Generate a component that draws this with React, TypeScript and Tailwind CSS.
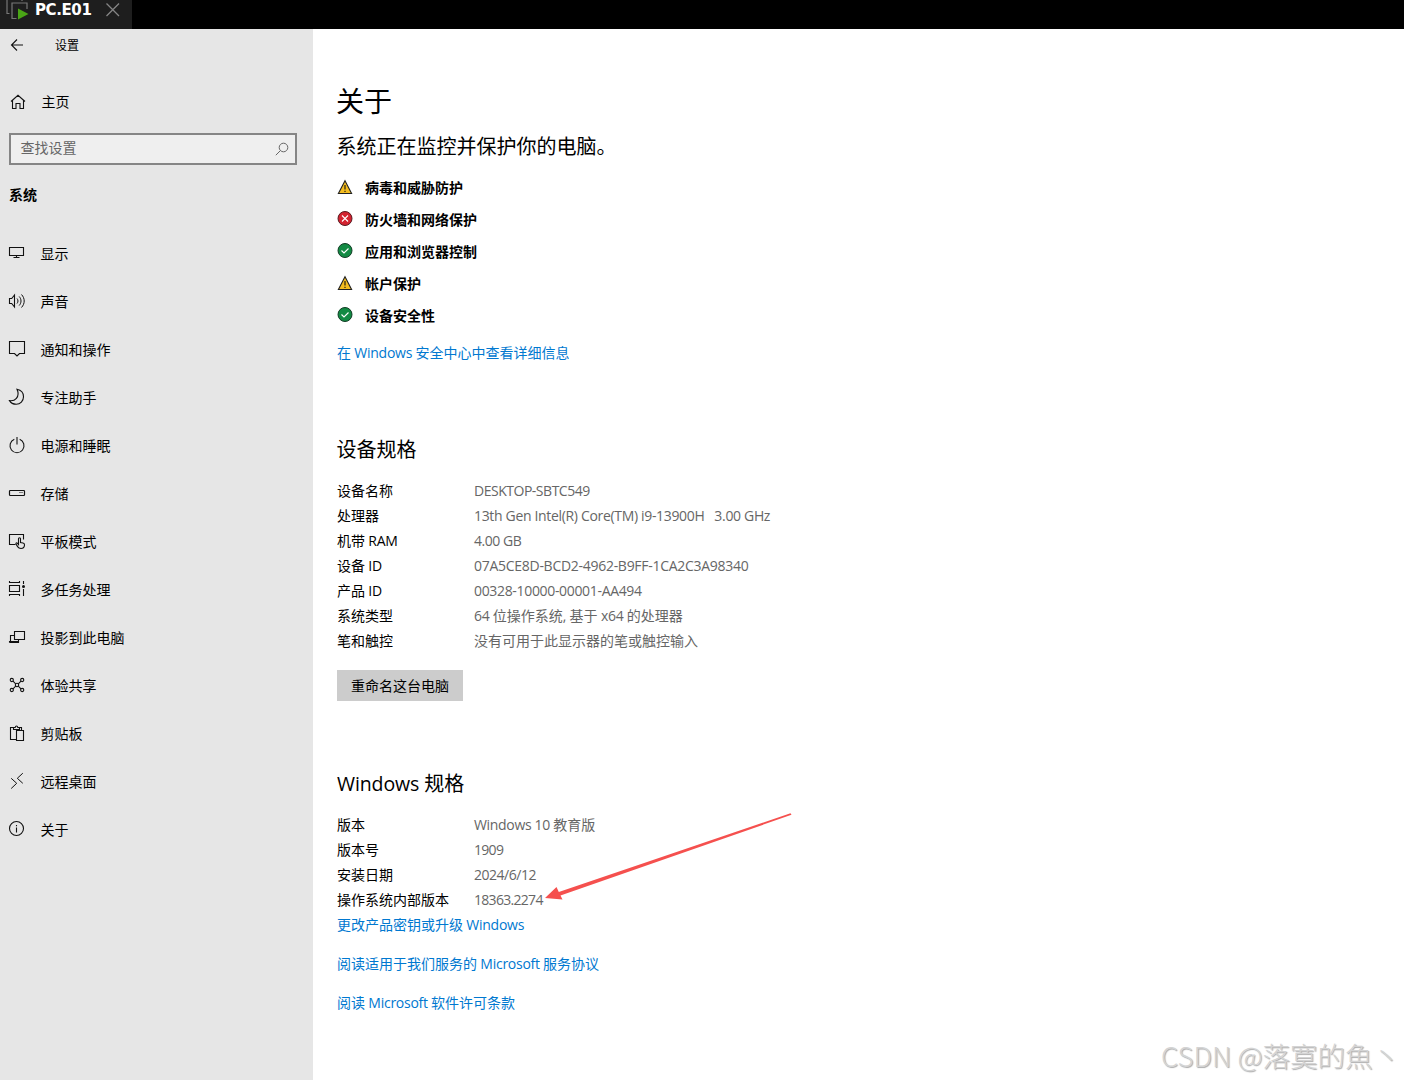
import React from "react";

const CJK = /([\u3000-\u9fff]+)/;

// Splits mixed text so that Latin runs can have their own size.
function Mixed({ text, latin }: { text: string; latin: string }) {
  return (
    <>
      {text.split(CJK).map((part, i) =>
        CJK.test(part) ? (
          <span key={i}>{part}</span>
        ) : (
          <span key={i} className={latin}>
            {part}
          </span>
        ),
      )}
    </>
  );
}

const BODY_LATIN = "text-[14px] tracking-[-0.33px] whitespace-pre font-['Open_Sans']";
const LINK_LATIN = "text-[14px] tracking-[-0.27px] whitespace-pre font-['Open_Sans']";
const DIGIT_LATIN = "text-[14px] tracking-[-0.7px] whitespace-pre font-['Open_Sans']";
const ID_LATIN = "text-[14px] tracking-[-0.28px] whitespace-pre font-['Open_Sans']";
const NAME_LATIN = "text-[14px] tracking-[-0.48px] whitespace-pre font-['Open_Sans']";

function Icon({ children }: { children: React.ReactNode }) {
  return (
    <svg width="18" height="18" viewBox="0 0 18 18" fill="none" stroke="#111" strokeWidth="1.1" className="shrink-0">
      {children}
    </svg>
  );
}

const NAV: { label: string; icon: React.ReactNode }[] = [
  { label: "显示", icon: <path d="M1.5 3.5h14v8h-14zM8.5 11.5v2M5.5 13.5h6" /> },
  {
    label: "声音",
    icon: (
      <>
        <path d="M1.5 6.5h2.2L6.5 3v12L3.7 11.5H1.5z" />
        <path d="M9 6.5c1.3 1.5 1.3 3.5 0 5M11.2 4.5c2.4 2.7 2.4 6.3 0 9M13.5 2.5c3.6 3.9 3.6 9.1 0 13" strokeWidth="1" />
      </>
    ),
  },
  { label: "通知和操作", icon: <path d="M1.5 1.5h15v12h-5l-2.5 2.5-2.500-2.500h-5z" /> },
  { label: "专注助手", icon: <path d="M9 1.2c4 .8 6.500 3.500 6.500 7.500 0 4.300-3.200 7.500-7.300 7.500-3 0-5.300-1.200-6.700-3.600 3 .4 5.300-.4 6.900-2.300C10.400 8 10.500 4.500 9 1.200z" /> },
  {
    label: "电源和睡眠",
    icon: (
      <>
        <path d="M6.300 3.300a7 7 0 1 0 5.400 0" />
        <path d="M9 1v7.500" />
      </>
    ),
  },
  {
    label: "存储",
    icon: (
      <>
        <rect x="1.500" y="6.500" width="15" height="5" rx=".8" strokeWidth="1.200" />
        <path d="M11.500 8.500h1M13.500 8.500h1" />
      </>
    ),
  },
  {
    label: "平板模式",
    icon: (
      <>
        <path d="M7.500 12.500h-6v-10h14v5" />
        <path d="M10.500 12.500V6.800c0-1.500 2-1.500 2 0v3.700l2.500.5c1 .2 1.500.8 1.500 1.800 0 2.200-1.300 3.700-3.500 3.700-1.600 0-2.600-.6-3.400-1.900L8 12c-.4-1 .6-1.500 1.300-.8l1.200 1.300z" />
      </>
    ),
  },
  {
    label: "多任务处理",
    icon: (
      <>
        <path d="M1.500 5.500h10v6h-10zM1.500 1v1.500h10V1M1.500 16v-1.500h10V16M15.500 1v3M15.500 9v7" />
        <circle cx="15.500" cy="6.500" r="1.500" fill="#111" stroke="none" />
      </>
    ),
  },
  {
    label: "投影到此电脑",
    icon: <path d="M6.500 3.500h10v8h-10zM6.500 7.500h-4v6M1.500 14.500h9v-3M1.500 14.500v-1h8.500" />,
  },
  {
    label: "体验共享",
    icon: (
      <>
        <circle cx="3.800" cy="4" r="1.600" />
        <circle cx="14.200" cy="4" r="1.600" />
        <circle cx="3.800" cy="14" r="1.600" />
        <circle cx="14.200" cy="14" r="1.600" />
        <circle cx="9" cy="9" r="1.700" />
        <path d="M5 5.200l2.700 2.600M13 5.200l-2.700 2.600M5 12.800l2.700-2.600M13 12.800l-2.700-2.600" />
      </>
    ),
  },
  {
    label: "剪贴板",
    icon: <path d="M8.500 15.500h-6v-12h3M11 3.500h2.500v3M5.500 5.500v-2h1.700c.3-2 2.300-2 2.600 0h1.700v2zM8.500 6.500h7v10h-7z" />,
  },
  { label: "远程桌面", icon: <path d="M14.800 1.200L9.300 6.300l5.500 5M3.200 6.300l5.500 5-5.500 5.200" strokeWidth="1" /> },
  {
    label: "关于",
    icon: (
      <>
        <circle cx="8.500" cy="8.500" r="7" />
        <path d="M8.500 7.500v5M8.500 5v1.200" />
      </>
    ),
  },
];

function StatusIcon({ kind }: { kind: "warn" | "bad" | "ok" }) {
  if (kind === "warn")
    return (
      <svg width="16" height="16" viewBox="0 0 16 16" className="shrink-0">
        <path d="M8 1.800L14.600 14.500H1.400z" fill="#f5bd1f" stroke="#222" strokeWidth="1.100" />
        <path d="M8 6v4.500M8 11.700v1.300" stroke="#111" strokeWidth="1.100" />
      </svg>
    );
  return (
    <svg width="16" height="16" viewBox="0 0 16 16" className="shrink-0" fill="none">
      <circle cx="8" cy="7.500" r="7" fill={kind === "ok" ? "#128a43" : "#d32330"} stroke={kind === "ok" ? "#123c25" : "#581a20"} />
      <path d={kind === "ok" ? "M4.500 7.500l2.500 2.500 4.500-4.500" : "M5 4.500l6 6M11 4.500l-6 6"} stroke="#fff" strokeWidth="1.100" />
    </svg>
  );
}

const STATUS: ["warn" | "bad" | "ok", string][] = [
  ["warn", "病毒和威胁防护"],
  ["bad", "防火墙和网络保护"],
  ["ok", "应用和浏览器控制"],
  ["warn", "帐户保护"],
  ["ok", "设备安全性"],
];

const DEVICE = [
  ["设备名称", "DESKTOP-SBTC549", NAME_LATIN],
  ["处理器", "13th Gen Intel(R) Core(TM) i9-13900H   3.00 GHz", BODY_LATIN],
  ["机带 RAM", "4.00 GB", NAME_LATIN],
  ["设备 ID", "07A5CE8D-BCD2-4962-B9FF-1CA2C3A98340", ID_LATIN],
  ["产品 ID", "00328-10000-00001-AA494", BODY_LATIN],
  ["系统类型", "64 位操作系统, 基于 x64 的处理器", LINK_LATIN],
  ["笔和触控", "没有可用于此显示器的笔或触控输入", BODY_LATIN],
];

const WINDOWS = [
  ["版本", "Windows 10 教育版", BODY_LATIN],
  ["版本号", "1909", DIGIT_LATIN],
  ["安装日期", "2024/6/12", NAME_LATIN],
  ["操作系统内部版本", "18363.2274", DIGIT_LATIN],
];

function Specs({ rows }: { rows: string[][] }) {
  return (
    <dl className="text-[14px]">
      {rows.map(([k, v, latin]) => (
        <div key={k} className="flex h-[25px] leading-[25px] whitespace-nowrap">
          <dt className="w-[137px] shrink-0 text-black">
            <Mixed text={k} latin={LINK_LATIN} />
          </dt>
          <dd className="text-[#666]">
            <Mixed text={v} latin={latin} />
          </dd>
        </div>
      ))}
    </dl>
  );
}

function Link({ text }: { text: string }) {
  return (
    <a className="block h-[25px] text-[14px] leading-[25px] whitespace-nowrap text-[#0078d0]">
      <Mixed text={text} latin={LINK_LATIN} />
    </a>
  );
}

export default function App() {
  return (
    <div className="flex h-[1080px] w-[1404px] flex-col overflow-hidden bg-white font-['Open_Sans','Noto_Sans_CJK_SC',sans-serif] text-black">
      <header className="h-[29px] shrink-0 bg-black">
        <div className="flex h-[29px] w-[132px] bg-[#1e1e1e] pl-[6px]">
          <svg width="24" height="22" viewBox="0 0 24 22" fill="none" stroke="#777" strokeWidth="1.200" className="shrink-0">
            <path d="M1 0v13.500h2.500M10.500 18.500H6V3h15v6M16 0v1" />
            <path d="M12 8.500l10.500 5.500L12 19.500z" fill="#4aa516" stroke="none" />
          </svg>
          <span className="ml-[5px] w-[61px] text-[15px] leading-[20px] font-bold tracking-[-0.4px] text-white font-['DejaVu_Sans']">PC.E01</span>
          <svg width="14" height="20" viewBox="0 0 14 20" className="ml-[10px]" stroke="#858585" strokeWidth="1.300">
            <path d="M.5 3.500l12.500 12.500M13 3.500L.5 16" />
          </svg>
        </div>
      </header>

      <div className="flex min-h-0 flex-1">
        <aside className="w-[313px] shrink-0 bg-[#e6e6e6]">
          <div className="flex h-[33px] items-center pl-[10px]">
            <svg width="14" height="14" viewBox="0 0 14 14" fill="none" stroke="#111" strokeWidth="1.100" className="-mt-[2px]">
              <path d="M13 7H1.500M7 1.500L1.500 7 7 12.500" />
            </svg>
            <span className="ml-[31px] text-[12px] leading-[20px]">设置</span>
          </div>
          <div className="mt-[28px] flex h-[24px] items-center pl-[10px]">
            <svg width="16" height="16" viewBox="0 0 16 16" fill="none" stroke="#111" strokeWidth="1.100">
              <path d="M1 7.500L8 1.300l7 6.200M2.500 6.500v8h3.500v-5h4v5h3.500v-8" />
            </svg>
            <span className="ml-[15.500px] text-[14px] leading-[24px]">主页</span>
          </div>
          <div className="mt-[19px] ml-[9px] flex h-[32px] w-[288px] items-center border-2 border-[#858585] bg-[#efefef] pr-[6px] pl-[9.500px]">
            <span className="-mt-[2px] flex-1 text-[14px] leading-[26px] text-[#666]">查找设置</span>
            <svg width="14" height="14" viewBox="0 0 14 14" fill="none" stroke="#666" strokeWidth="1">
              <circle cx="8.500" cy="5.500" r="4.300" />
              <path d="M5.500 8.500L.8 13.200" />
            </svg>
          </div>
          <h2 className="mt-[18px] pl-[9px] text-[14px] leading-[24px] font-bold">系统</h2>
          <nav className="mt-[22px]">
            {NAV.map((n) => (
              <a key={n.label} className="flex h-[48px] items-center pl-[8px]">
                <Icon>{n.icon}</Icon>
                <span className="mt-[2px] ml-[14.500px] text-[14px] leading-[24px]">{n.label}</span>
              </a>
            ))}
          </nav>
        </aside>

        <main className="relative flex-1 pl-[24px]">
          <h1 className="mt-[52px] -ml-[1px] text-[28px] leading-[40px]">关于</h1>
          <p className="mt-[11px] -ml-[0.500px] text-[20px] leading-[30px]">系统正在监控并保护你的电脑。</p>
          <ul className="mt-[10px]">
            {STATUS.map(([kind, label]) => (
              <li key={label} className="flex h-[32px] items-center">
                <div className="-mt-[3px] -ml-[0.500px] flex">
                  <StatusIcon kind={kind} />
                </div>
                <span className="ml-[12.500px] text-[14px] leading-[24px] font-bold">{label}</span>
              </li>
            ))}
          </ul>
          <div className="mt-[8px]">
            <Link text="在 Windows 安全中心中查看详细信息" />
          </div>

          <h2 className="mt-[70px] -ml-[0.500px] text-[20px] leading-[30px]">设备规格</h2>
          <div className="mt-[13px]">
            <Specs rows={DEVICE} />
          </div>
          <button className="mt-[17px] block h-[31px] w-[126px] bg-[#ccc] text-[14px] leading-[31px]">重命名这台电脑</button>

          <h2 className="mt-[68px] text-[20px] leading-[30px]">
            <Mixed text="Windows 规格" latin="text-[19.500px] tracking-[-0.1px] whitespace-pre" />
          </h2>
          <div className="mt-[13px]">
            <Specs rows={WINDOWS} />
          </div>
          <div className="flex flex-col gap-[14px]">
            <Link text="更改产品密钥或升级 Windows" />
            <Link text="阅读适用于我们服务的 Microsoft 服务协议" />
            <Link text="阅读 Microsoft 软件许可条款" />
          </div>

          {/* Annotation arrow over the build number */}
          <svg width="250" height="92" viewBox="0 0 250 92" className="absolute top-[783px] left-[230px]">
            <path d="M247.500 1.200L15.800 80 13.500 75 2 86l17.500 1.500L17.500 83.500 248.500 2.800z" fill="#f5504e" />
          </svg>
          <div className="absolute right-[4px] bottom-[5px] text-[27.500px] leading-[40px] font-light whitespace-nowrap text-[#d4d4d4] [text-shadow:1px_1px_1px_#aaa] font-['Noto_Sans_CJK_SC',sans-serif]">
            CSDN @落寞的魚丶
          </div>
        </main>
      </div>
    </div>
  );
}
